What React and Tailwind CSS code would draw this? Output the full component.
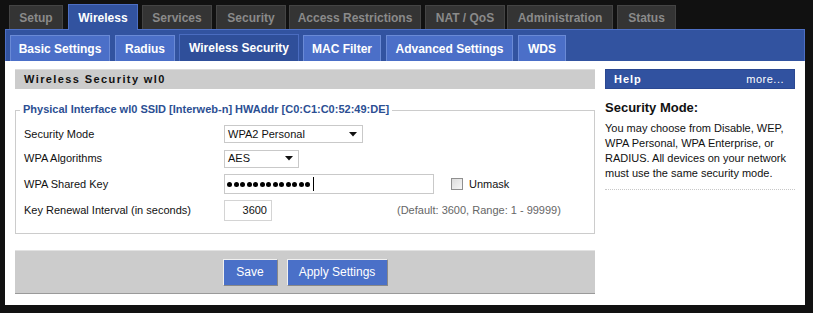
import React from "react";

const font = { fontFamily: '"Liberation Sans", Arial, sans-serif' };

const topTabs = [
  { label: "Setup", w: "w-[54px]", ml: "ml-[9px]" },
  { label: "Wireless", w: "w-[70px]", ml: "ml-[5px]", active: true },
  { label: "Services", w: "w-[70px]", ml: "ml-[4px]" },
  { label: "Security", w: "w-[70px]", ml: "ml-[4px]" },
  { label: "Access Restrictions", w: "w-[132px]", ml: "ml-[3px]" },
  { label: "NAT / QoS", w: "w-[80px]", ml: "ml-[4px]" },
  { label: "Administration", w: "w-[106px]", ml: "ml-[2px]" },
  { label: "Status", w: "w-[59px]", ml: "ml-[4px]" },
];

const subTabs = [
  { label: "Basic Settings", w: "w-[100px]", ml: "ml-[4px]" },
  { label: "Radius", w: "w-[60px]", ml: "ml-[5px]" },
  { label: "Wireless Security", w: "w-[120px]", ml: "ml-[4px]", active: true },
  { label: "MAC Filter", w: "w-[78px]", ml: "ml-[4px]" },
  { label: "Advanced Settings", w: "w-[127px]", ml: "ml-[5px]" },
  { label: "WDS", w: "w-[48px]", ml: "ml-[5px]" },
];

const Arrow = () => (
  <svg width="8" height="5" viewBox="0 0 8 5">
    <path d="M0 0 L8 0 L4 4.5 Z" fill="#111" />
  </svg>
);

const Select = ({ value, width }) => (
  <div
    className={`${width} h-[18px] flex items-center justify-between border border-[#c9c9c9] bg-white pl-[3px] pr-[5px] text-[11px] text-[#111]`}
  >
    <span>{value}</span>
    <Arrow />
  </div>
);

const App = () => {
  return (
    <div className="w-[813px] h-[313px] bg-[#111111] pt-[4px]" style={font}>
      {/* Top tabs */}
      <div className="flex items-end h-[25px]">
        {topTabs.map((t) => (
          <div
            key={t.label}
            className={
              t.active
                ? `${t.w} ${t.ml} h-[26px] -mb-px flex items-center justify-center bg-[#3253a0] border border-b-0 border-[#4d6fc4] text-white text-[12px] font-bold`
                : `${t.w} ${t.ml} h-[24px] flex items-center justify-center bg-[#343434] border border-b-0 border-[#444444] text-[#8a8a8a] text-[12px] font-bold`
            }
          >
            {t.label}
          </div>
        ))}
      </div>

      {/* Blue bar with sub tabs */}
      <div className="ml-[5px] w-[800px] h-[32px] bg-[#3253a0] border-t border-x border-[#4d6fc4] flex items-end">
        {subTabs.map((t) => (
          <div
            key={t.label}
            className={
              t.active
                ? `${t.w} ${t.ml} h-[27px] flex items-center justify-center bg-[#2f4f9a] border border-b-0 border-[#4a6cc0] text-white text-[12px] font-bold`
                : `${t.w} ${t.ml} h-[26px] flex items-center justify-center bg-[#4b6fc8] border border-b-0 border-[#6a8ad6] text-white text-[12px] font-bold`
            }
          >
            {t.label}
          </div>
        ))}
      </div>

      {/* Content */}
      <div className="ml-[5px] w-[800px] h-[244px] bg-white flex px-[10px] pt-[8px]">
        <div className="w-[580px] flex flex-col">
          <div className="h-[20px] bg-[#cccccc] border-t border-[#dddddd] flex items-center pl-[9px] text-[11px] font-bold tracking-[1.4px] text-[#111]">
            Wireless Security wl0
          </div>

          <fieldset className="mt-[15px] border border-[#cccccc] pl-[8px] pb-[9px]">
            <legend className="-ml-[4px] px-[3px] leading-[13px] text-[11px] font-bold text-[#2c4f93] relative -top-[1px]">
              Physical Interface wl0 SSID [Interweb-n] HWAddr [C0:C1:C0:52:49:DE]
            </legend>

            <div className="flex items-center h-[24px] mt-[5px] text-[11px] text-[#111]">
              <div className="w-[200px]">Security Mode</div>
              <Select value="WPA2 Personal" width="w-[139px]" />
            </div>

            <div className="flex items-center h-[25px] text-[11px] text-[#111]">
              <div className="w-[200px]">WPA Algorithms</div>
              <Select value="AES" width="w-[75px]" />
            </div>

            <div className="flex items-center h-[26px] text-[11px] text-[#111]">
              <div className="w-[200px]">WPA Shared Key</div>
              <div className="w-[210px] h-[20px] border border-[#c9c9c9] flex items-center pl-[2px] gap-[1.5px]">
                {Array.from({ length: 13 }).map((_, i) => (
                  <span key={i} className="w-[5px] h-[5px] rounded-full bg-black" />
                ))}
                <span className="w-px h-[14px] bg-black ml-[1px]" />
              </div>
              <div className="ml-[17px] w-[12px] h-[12px] border border-[#8f8f8f] bg-gradient-to-br from-[#dcdcdc] to-[#f6f6f6]" />
              <span className="ml-[6px]">Unmask</span>
            </div>

            <div className="flex items-center h-[27px] text-[11px] text-[#111]">
              <div className="w-[200px]">Key Renewal Interval (in seconds)</div>
              <div className="w-[48px] h-[21px] border border-[#d4d4d4] flex items-center justify-end pr-[4px]">
                3600
              </div>
              <span className="ml-[125px] text-[#666666]">(Default: 3600, Range: 1 - 99999)</span>
            </div>
          </fieldset>

          <div className="mt-[16px] h-[44px] bg-[#cccccc] border-t border-[#e2e2e2] border-b border-b-[#9a9a9a] flex items-center justify-center gap-[9px]">
            <button className="w-[55px] h-[27px] bg-[#4a70c8] border border-t-[#f0f0f0] border-l-[#f0f0f0] border-r-[#888] border-b-[#888] text-white text-[12px]">
              Save
            </button>
            <button className="w-[101px] h-[27px] bg-[#4a70c8] border border-t-[#f0f0f0] border-l-[#f0f0f0] border-r-[#888] border-b-[#888] text-white text-[12px]">
              Apply Settings
            </button>
          </div>
        </div>

        {/* Help */}
        <div className="ml-[10px] w-[190px] flex flex-col">
          <div className="h-[20px] bg-[#3152a0] border border-[#2b4892] flex items-center justify-between pl-[8px] pr-[10px] text-white text-[11px]">
            <span className="font-bold tracking-[1px]">Help</span>
            <span className="tracking-[0.5px]">more...</span>
          </div>
          <div className="mt-[9px] text-[13px] font-bold text-[#111]">Security Mode:</div>
          <p className="mt-[3px] text-[11px] leading-[15px] text-[#111]">
            You may choose from Disable, WEP, WPA Personal, WPA Enterprise, or RADIUS. All devices on your network must use the same security mode.
          </p>
          <div className="mt-[8px] border-t border-dotted border-[#c8c8c8]" />
        </div>
      </div>
    </div>
  );
};

export default App;
